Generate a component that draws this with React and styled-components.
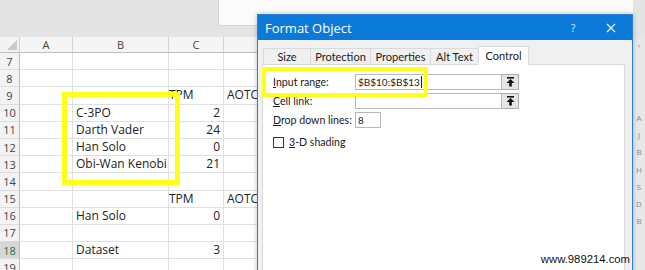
import React from "react";
import styled, { createGlobalStyle } from "styled-components";

const Global = createGlobalStyle`
  html, body { margin: 0; padding: 0; background: #fff; }
  body { width: 645px; height: 270px; overflow: hidden; }
  * { box-sizing: border-box; }
`;

const Root = styled.div`
  position: relative;
  width: 645px;
  height: 270px;
  overflow: hidden;
  display: flex;
  flex-direction: column;
  background: #e6e6e6;
  font-family: "Open Sans", "Noto Sans", sans-serif;
`;

const TopBar = styled.div`
  height: 37px;
  flex: none;
  display: flex;
  background: #e4e4e4;
`;

const TopPanel = styled.div`
  margin-left: 218px;
  width: 415px;
  height: 26px;
  background: #fbfbfb;
  border-left: 1px solid #d6d6d6;
  border-bottom: 1px solid #d6d6d6;
`;

const Body = styled.div`
  flex: 1;
  display: flex;
  min-height: 0;
`;

const Sheet = styled.div`
  flex: 1;
  display: grid;
  grid-template-columns: 20px 53px 96px 55px 1fr;
  grid-template-rows: 16px;
  grid-auto-rows: 17.2px;
  background: #fff;
  font-size: 12px;
  color: #222;
`;

const Corner = styled.div`
  background: #f3f3f3;
  border-right: 1px solid #cfcfcf;
  border-bottom: 1px solid #bdbdbd;
  position: relative;
  overflow: hidden;
  &::after {
    content: "";
    position: absolute;
    right: 2px;
    bottom: 2px;
    width: 0;
    height: 0;
    border-left: 10px solid transparent;
    border-bottom: 10px solid #c8c8c8;
  }
`;

const ColHead = styled.div`
  background: #f5f5f5;
  border-right: 1px solid #d4d4d4;
  border-bottom: 1px solid #bdbdbd;
  display: flex;
  align-items: center;
  justify-content: center;
  font-size: 11px;
  color: #444;
`;

const RowHead = styled.div`
  background: ${(p) => (p.$selected ? "#d6d6d6" : "#f3f3f3")};
  border-right: 1px solid #bdbdbd;
  border-bottom: 1px solid #dcdcdc;
  display: flex;
  align-items: center;
  justify-content: center;
  font-size: 11px;
  color: ${(p) => (p.$selected ? "#217346" : "#444")};
`;

const Cell = styled.div`
  border-right: 1px solid #e0e0e0;
  border-bottom: 1px solid #e0e0e0;
  display: flex;
  align-items: center;
  justify-content: ${(p) => (p.$num ? "flex-end" : "flex-start")};
  padding: ${(p) => (p.$num ? "0 3px 0 0" : `0 0 0 ${p.$lead ?? 3}px`)};
  white-space: nowrap;
  overflow: visible;
  line-height: 1;
`;

const SidePane = styled.div`
  width: 12px;
  flex: none;
  background: #e8e8e8;
  display: flex;
  flex-direction: column;
  align-items: center;
  padding-top: 2px;
  font-size: 8px;
  color: #8a8a8a;
`;

const SideMark = styled.div`
  height: ${(p) => p.$h || 17.2}px;
  display: flex;
  align-items: center;
`;

const Highlight = styled.div`
  position: absolute;
  border: ${(p) => p.$w}px solid #ffff1a;
  pointer-events: none;
`;

const Dialog = styled.div`
  position: absolute;
  left: 257px;
  top: 14px;
  width: 376px;
  height: 300px;
  background: #f0f0f0;
  border: 1px solid #2c7fd6;
  box-shadow: 0 0 5px rgba(40, 80, 130, 0.35);
  display: flex;
  flex-direction: column;
  font-family: Lato, "Open Sans", sans-serif;
  color: #1a1a1a;
`;

const TitleBar = styled.div`
  height: 25px;
  flex: none;
  background: #0a79d8;
  color: #fff;
  display: flex;
  align-items: center;
  padding: 0 14px 0 7px;
  font-family: "Open Sans", "Noto Sans", sans-serif;
  font-size: 13px;
`;

const Title = styled.div`
  flex: 1;
`;

const TitleBtn = styled.div`
  width: 14px;
  display: flex;
  justify-content: center;
  margin-left: ${(p) => p.$gap}px;
  font-size: 11px;
  color: #dbe9f8;
`;

const TabStrip = styled.div`
  display: flex;
  align-items: flex-end;
  height: 24px;
  padding-left: 6px;
  flex: none;
`;

const Tab = styled.div`
  width: ${(p) => p.$w}px;
  height: ${(p) => (p.$active ? 19 : 17)}px;
  display: flex;
  align-items: center;
  justify-content: center;
  font-size: 11px;
  background: ${(p) => (p.$active ? "#fff" : "#f0f0f0")};
  border: 1px solid #d9d9d9;
  border-bottom: ${(p) => (p.$active ? "1px solid #fff" : "1px solid #d9d9d9")};
  margin-left: -1px;
  margin-bottom: -1px;
  position: relative;
  z-index: ${(p) => (p.$active ? 1 : 0)};
  color: #1a1a1a;
`;

const Panel = styled.div`
  position: relative;
  flex: 1;
  margin: 0 7px 0 4px;
  background: #fff;
  border: 1px solid #d9d9d9;
  padding: 9px 0 0 10px;
  display: flex;
  flex-direction: column;
  gap: 3px;
  font-size: 10.6px;
`;

const FieldRow = styled.div`
  display: flex;
  align-items: center;
  height: 16px;
`;

const Label = styled.div`
  width: 82px;
  flex: none;
  white-space: nowrap;
  color: #1a1a1a;
`;

const U = styled.span`
  text-decoration: underline;
  text-underline-offset: 1px;
`;

const TextBox = styled.div`
  width: ${(p) => p.$w}px;
  height: 16px;
  border: 1px solid #b8b8b8;
  background: #fff;
  display: flex;
  align-items: center;
  padding-left: 2px;
  font-size: 10px;
  color: #222;
`;

const Caret = styled.span`
  display: inline-block;
  width: 1px;
  height: 12px;
  background: #222;
  margin-left: 1px;
`;

const PickBtn = styled.div`
  width: 17px;
  height: 16px;
  border: 1px solid #adadad;
  border-left: none;
  background: #e5e5e5;
  display: flex;
  align-items: center;
  justify-content: center;
`;

const CheckRow = styled.div`
  display: flex;
  align-items: center;
  gap: 5px;
  margin-top: 4px;
  height: 14px;
`;

const Box = styled.div`
  width: 11px;
  height: 11px;
  border: 1px solid #333;
  background: #fff;
`;

const Watermark = styled.div`
  position: absolute;
  right: 15px;
  bottom: 5px;
  font-family: "Liberation Sans", Arial, sans-serif;
  font-size: 11.3px;
  color: #111;
`;

const UpIcon = () => (
  <svg width="9" height="10" viewBox="0 0 9 10">
    <rect x="1" y="0" width="7" height="1.6" fill="#111" />
    <polygon points="4.5,2 8.5,6 0.5,6" fill="#111" />
    <rect x="3.2" y="5.5" width="2.6" height="4" fill="#111" />
  </svg>
);

const CloseIcon = () => (
  <svg width="10" height="10" viewBox="0 0 10 10">
    <path d="M1 1 L9 9 M9 1 L1 9" stroke="#eaf3fc" strokeWidth="1.3" />
  </svg>
);

const rows = [
  { n: 7 },
  { n: 8 },
  { n: 9, c: "TPM", cText: true, d: "AOTC" },
  { n: 10, b: "C-3PO", c: "2" },
  { n: 11, b: "Darth Vader", c: "24" },
  { n: 12, b: "Han Solo", c: "0" },
  { n: 13, b: "Obi-Wan Kenobi", c: "21" },
  { n: 14 },
  { n: 15, c: "TPM", cText: true, d: "AOTC" },
  { n: 16, b: "Han Solo", c: "0" },
  { n: 17 },
  { n: 18, b: "Dataset", c: "3", sel: true },
  { n: 19 },
];

const sideMarks = ["A", "J", "B", "H", "S", "D", "B"];

const tabs = [
  { t: "Size", w: 48 },
  { t: "Protection", w: 61 },
  { t: "Properties", w: 61 },
  { t: "Alt Text", w: 49 },
];

export default function App() {
  return (
    <Root>
      <Global />
      <TopBar>
        <TopPanel />
      </TopBar>
      <Body>
        <Sheet>
          <Corner />
          <ColHead>A</ColHead>
          <ColHead>B</ColHead>
          <ColHead>C</ColHead>
          <ColHead>D</ColHead>
          {rows.map((r) => (
            <React.Fragment key={r.n}>
              <RowHead $selected={r.sel}>{r.n}</RowHead>
              <Cell />
              <Cell>{r.b}</Cell>
              <Cell $num={!r.cText} $lead={r.cText ? -1 : 3}>
                {r.c}
              </Cell>
              <Cell>{r.d}</Cell>
            </React.Fragment>
          ))}
        </Sheet>
        <SidePane>
          <SideMark $h={10}>‹</SideMark>
          <SideMark $h={60} />
          {sideMarks.map((m, i) => (
            <SideMark key={i}>{m}</SideMark>
          ))}
        </SidePane>
      </Body>

      <Highlight $w={5} style={{ left: 62, top: 92, width: 118, height: 93 }} />

      <Dialog>
        <TitleBar>
          <Title>Format Object</Title>
          <TitleBtn $gap={0}>?</TitleBtn>
          <TitleBtn $gap={24}>
            <CloseIcon />
          </TitleBtn>
        </TitleBar>
        <TabStrip>
          {tabs.map((t) => (
            <Tab key={t.t} $w={t.w}>
              {t.t}
            </Tab>
          ))}
          <Tab $w={51} $active>
            Control
          </Tab>
        </TabStrip>
        <Panel>
          <FieldRow>
            <Label>
              <U>I</U>nput range:
            </Label>
            <TextBox $w={147}>
              $B$10:$B$13
              <Caret />
            </TextBox>
            <PickBtn>
              <UpIcon />
            </PickBtn>
          </FieldRow>
          <FieldRow>
            <Label>
              <U>C</U>ell link:
            </Label>
            <TextBox $w={147} />
            <PickBtn>
              <UpIcon />
            </PickBtn>
          </FieldRow>
          <FieldRow>
            <Label>
              <U>D</U>rop down lines:
            </Label>
            <TextBox $w={26}>8</TextBox>
          </FieldRow>
          <CheckRow>
            <Box />
            <span>
              <U>3</U>-D shading
            </span>
          </CheckRow>
          <Highlight $w={4} style={{ left: -1, top: 2, width: 166, height: 30 }} />
        </Panel>
      </Dialog>

      <Watermark>www.989214.com</Watermark>
    </Root>
  );
}
